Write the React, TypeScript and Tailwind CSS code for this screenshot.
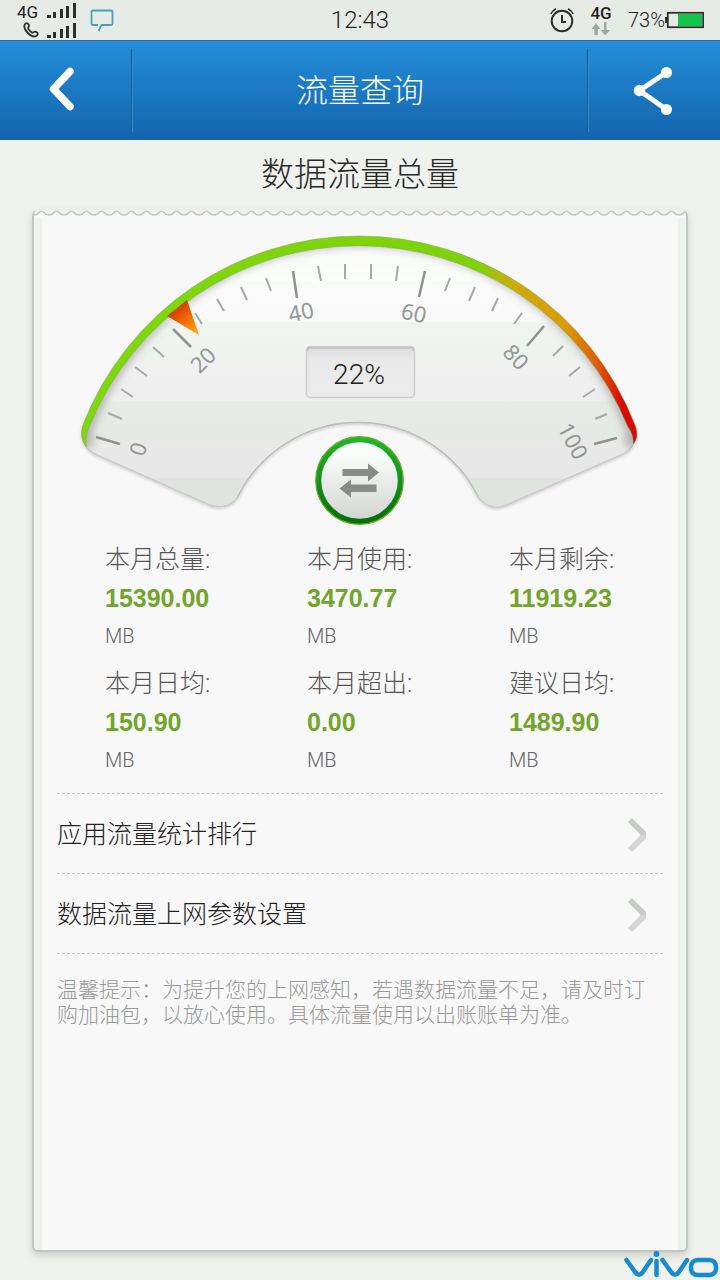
const sans = "font-['Roboto','Noto_Sans_CJK_SC',sans-serif]";

const majorTicks = [
  [96, 437, 120, 444],
  [173, 329, 191, 347],
  [293, 271, 297, 298],
  [425, 271, 419, 297],
  [544, 326, 527, 346],
  [617, 438, 594, 444],
];

const minorTicks = [
  [108, 413, 122, 419],
  [121, 389, 133, 397],
  [135, 367, 147, 376],
  [153, 347, 164, 357],
  [195, 313, 202, 324],
  [217, 299, 224, 311],
  [241, 287, 247, 300],
  [266, 278, 271, 291],
  [318, 266, 321, 281],
  [345, 264, 345, 279],
  [371, 264, 371, 279],
  [398, 266, 396, 281],
  [450, 278, 445, 291],
  [475, 287, 469, 301],
  [498, 298, 492, 311],
  [522, 313, 514, 324],
  [563, 346, 553, 356],
  [580, 367, 569, 376],
  [595, 389, 583, 397],
  [607, 414, 595, 419],
];

const scale = [
  { value: 0, x: 138, y: 449, angle: -72 },
  { value: 20, x: 203, y: 360, angle: -44 },
  { value: 40, x: 301, y: 312, angle: -12 },
  { value: 60, x: 414, y: 313, angle: 12 },
  { value: 80, x: 516, y: 357, angle: 47 },
  { value: 100, x: 573, y: 441, angle: 62 },
];

const stats = [
  { label: "本月总量:", value: "15390.00" },
  { label: "本月使用:", value: "3470.77" },
  { label: "本月剩余:", value: "11919.23" },
  { label: "本月日均:", value: "150.90" },
  { label: "本月超出:", value: "0.00" },
  { label: "建议日均:", value: "1489.90" },
];

const links = ["应用流量统计排行", "数据流量上网参数设置"];

const facePath =
  "M97 455C86 450 79 442 83 426A296 296 0 0 1 634 426C639 442 632 450 621 455L509 504Q490 513 478 497A134 134 0 0 0 238 497Q226 513 205 503Z";

function Signal() {
  return (
    <svg width="30" height="16" viewBox="0 0 30 16" fill="#2b2e2b" aria-hidden="true">
      <rect x="0" y="13" width="4" height="3" />
      <rect x="6" y="10" width="3" height="6" />
      <rect x="13" y="7" width="3" height="9" />
      <rect x="19" y="4" width="3" height="12" />
      <rect x="26" y="1" width="3" height="15" />
    </svg>
  );
}

function StatusBar() {
  return (
    <div className="grid h-10 grid-cols-[1fr_auto_1fr] items-center bg-[#e7ebe6] text-[#1f221f]">
      <div className="flex items-center pl-[17px]">
        <div className="flex w-[30px] flex-col items-start">
          <span className="text-[17px] leading-5">4G</span>
          <svg className="ml-1.5" width="16" height="16" viewBox="0 0 16 16" fill="none" stroke="#2b2e2b" strokeWidth="1.8" strokeLinejoin="round" aria-hidden="true">
            <path d="M1.4 3.4C1.8 1.6 3.6.6 4.8 1.6c1.300 1.100 1.500 2.600.6 3.500-.8.8-.5 1.700 1.500 3.800 1.900 1.800 3 2.100 3.700 1.300 1-.9 2.400-.7 3.600.4 1.200 1.200.2 2.900-1.400 3.600-2.300.9-5.200-.4-8-3.200C2.200 8.300 1 5.600 1.400 3.400Z" />
          </svg>
        </div>
        <div className="flex flex-col gap-1">
          <Signal />
          <Signal />
        </div>
        <svg className="ml-3" width="26" height="24" viewBox="0 0 26 24" fill="none" stroke="#43a3b5" strokeWidth="1.800" strokeLinejoin="round" aria-hidden="true">
          <path d="M9 17H4q-1.500 0-1.500-1.500V4q0-1.500 1.500-1.500h18q1.500 0 1.500 1.500v11.500Q23.500 17 22 17h-9.500L9.500 23" />
        </svg>
      </div>
      <span className="text-2xl font-light">12:43</span>
      <div className="flex items-center justify-end pr-4">
        <svg width="24" height="26" viewBox="0 0 24 26" fill="none" stroke="#2b2e2b" strokeWidth="2" aria-hidden="true">
          <circle cx="12" cy="14" r="10.300" />
          <path d="M12 8v7h4" />
          <path d="M.8 7Q2.500 3.600 6 1.800M23.200 7Q21.500 3.600 18 1.800" strokeWidth="1.600" />
        </svg>
        <div className="ml-4 flex w-[22px] flex-col items-center">
          <span className="text-[17px] font-medium leading-[17px]">4G</span>
          <svg width="20" height="14" viewBox="0 0 20 14" fill="#a3a7a3" aria-hidden="true">
            <path d="M5 1l4.500 6H6.800v6H3.300V7H.5ZM13 0h2.500v8h3.500l-4.700 5.500L9.500 8H13Z" />
          </svg>
        </div>
        <span className="ml-4 text-xl font-light">73%</span>
        <svg width="39" height="18" viewBox="0 0 39 18" aria-hidden="true">
          <rect x="0" y="6" width="3" height="6" fill="#2b2e2b" />
          <rect x="2.800" y="1.800" width="35.400" height="14.400" fill="#e7ebe6" stroke="#2b2e2b" strokeWidth="1.800" />
          <rect x="13" y="3" width="24" height="12" fill="#15c24c" />
        </svg>
      </div>
    </div>
  );
}

function Header() {
  return (
    <header className="flex h-[100px] items-stretch border-t border-[#1c6cae] bg-linear-to-b from-[#258dd8] to-[#1265ad] text-white">
      <button type="button" aria-label="返回" className="flex w-[131px] items-center justify-center pr-2 pb-1">
        <svg width="28" height="46" viewBox="0 0 28 46" fill="none" stroke="#fff" strokeWidth="7.500" strokeLinecap="round" strokeLinejoin="round" aria-hidden="true">
          <path d="M22 5.500 5.500 23 22 40.500" />
        </svg>
      </button>
      <span className="my-2 w-0.5 border-r border-[#3b8cc8] bg-[#14599a]" />
      <h1 className="flex flex-1 items-center justify-center text-[32px] font-light">流量查询</h1>
      <span className="my-2 w-0.5 border-r border-[#3b8cc8] bg-[#14599a]" />
      <button type="button" aria-label="分享" className="flex w-[131px] items-center justify-center pr-1">
        <svg width="40" height="50" viewBox="0 0 40 50" fill="#fff" aria-hidden="true">
          <path d="M33.500 6.500 6.500 24.500l27 19" fill="none" stroke="#fff" strokeWidth="5" />
          <circle cx="33.500" cy="6.500" r="5.500" />
          <circle cx="6.500" cy="24.500" r="5.700" />
          <circle cx="33.500" cy="43.500" r="5.500" />
        </svg>
      </button>
    </header>
  );
}

function TornEdge() {
  return (
    <svg className="block h-2 w-full" aria-hidden="true">
      <defs>
        <pattern id="scallop" width="15" height="8" patternUnits="userSpaceOnUse">
          <rect width="15" height="8" fill="#f0f2ee" />
          <path d="M0 5Q3 5 4.500 3Q7.500 -.5 10.500 3Q12 5 15 5V8H0Z" fill="#f8f8f8" />
          <path d="M0 5Q3 5 4.500 3Q7.500 -.5 10.500 3Q12 5 15 5" fill="none" stroke="#c3c7c2" strokeWidth="1.500" />
        </pattern>
      </defs>
      <rect width="100%" height="8" fill="url(#scallop)" />
    </svg>
  );
}

function Gauge() {
  return (
    <svg className="block w-full" viewBox="57 218 606 312" role="img" aria-label="22%">
      <defs>
        <linearGradient id="face" gradientUnits="userSpaceOnUse" x1="0" y1="240" x2="0" y2="510">
          <stop offset="0" stopColor="#f8f8f8" />
          <stop offset=".15" stopColor="#fcfffc" />
          <stop offset=".152" stopColor="#fbfbfb" />
          <stop offset=".303" stopColor="#f8f9f8" />
          <stop offset=".304" stopColor="#f0f5f0" />
          <stop offset=".447" stopColor="#eef2ee" />
          <stop offset=".448" stopColor="#f1f1f1" />
          <stop offset=".595" stopColor="#eeeeee" />
          <stop offset=".597" stopColor="#e7ece7" />
          <stop offset=".74" stopColor="#e6eae6" />
          <stop offset=".742" stopColor="#e9e9e9" />
          <stop offset=".88" stopColor="#e7e7e7" />
          <stop offset=".882" stopColor="#dfe4df" />
          <stop offset="1" stopColor="#dfe4df" />
        </linearGradient>
        <linearGradient id="rim" gradientUnits="userSpaceOnUse" x1="80" y1="0" x2="638" y2="0">
          <stop offset="0" stopColor="#7fd80d" />
          <stop offset=".71" stopColor="#7dd20c" />
          <stop offset=".78" stopColor="#d0aa0c" />
          <stop offset=".87" stopColor="#dc9a08" />
          <stop offset=".93" stopColor="#dd5a05" />
          <stop offset=".97" stopColor="#d80a03" />
        </linearGradient>
        <linearGradient id="needle" gradientUnits="userSpaceOnUse" x1="174" y1="304" x2="198" y2="334">
          <stop offset="0" stopColor="#c92f08" />
          <stop offset=".5" stopColor="#f26b05" />
          <stop offset="1" stopColor="#ffac10" />
        </linearGradient>
        <linearGradient id="ring" x1="0" y1="0" x2="0" y2="1">
          <stop offset="0" stopColor="#20b62c" />
          <stop offset="1" stopColor="#056f0a" />
        </linearGradient>
        <linearGradient id="knob" x1="0" y1="0" x2="0" y2="1">
          <stop offset=".2" stopColor="#fafcfa" />
          <stop offset="1" stopColor="#d2d4d2" />
        </linearGradient>
        <linearGradient id="readout" x1="0" y1="0" x2="0" y2="1">
          <stop offset="0" stopColor="#dedede" />
          <stop offset=".3" stopColor="#e8e9e8" />
          <stop offset="1" stopColor="#ececec" />
        </linearGradient>
        <filter id="soft" x="-10%" y="-10%" width="120%" height="120%">
          <feGaussianBlur stdDeviation="4" />
        </filter>
        <filter id="lift" x="-5%" y="-5%" width="110%" height="115%">
          <feDropShadow dx="0" dy="1" stdDeviation="1.500" floodColor="#000" floodOpacity=".2" />
        </filter>
        <clipPath id="faceClip">
          <path d={facePath} />
        </clipPath>
      </defs>

      <path d={facePath} fill="url(#face)" stroke="#c9ccc9" strokeWidth="1.500" filter="url(#lift)" />
      <g clipPath="url(#faceClip)">
        <path d="M90 446Q82 438 88 425A291 291 0 0 1 630 425Q636 438 628 446" fill="none" stroke="#777" strokeOpacity=".5" strokeWidth="12" filter="url(#soft)" />
        <path d="M238 497A134 134 0 0 1 478 497" fill="none" stroke="#b9bcb9" strokeWidth="2" />
      </g>
      <path d="M87 447C82 441 80 436 83 425A296 296 0 0 1 635 425C639 436 636 441 633 444C634 437 631 431 628 427A291 291 0 0 0 89 427C86 434 85 441 87 447Z" fill="url(#rim)" stroke="#7d9a4a" strokeOpacity=".4" strokeWidth="1" />

      {minorTicks.map(([x1, y1, x2, y2]) => (
        <line key={`${x1}-${y1}`} x1={x1} y1={y1} x2={x2} y2={y2} stroke="#a6a9a6" strokeWidth="2" />
      ))}
      {majorTicks.map(([x1, y1, x2, y2]) => (
        <line key={`${x1}-${y1}`} x1={x1} y1={y1} x2={x2} y2={y2} stroke="#8f928f" strokeWidth="2.500" />
      ))}
      {scale.map(({ value, x, y, angle }) => (
        <text key={value} transform={`translate(${x} ${y}) rotate(${angle})`} textAnchor="middle" dy="8" fill="#949794" className="font-['Noto_Sans',sans-serif] text-[22px]">
          {value}
        </text>
      ))}
      <path d="M167 316 187 300 199 335Z" fill="url(#needle)" />

      <rect x="306.500" y="346.500" width="108" height="51" rx="4" fill="url(#readout)" stroke="#cdcfcd" strokeWidth="1.500" />
      <path d="M308 351v-3h105v3" fill="none" stroke="#b4b6b4" strokeOpacity=".6" strokeWidth="2" />
      <text x="359" y="384" textAnchor="middle" fill="#222" className="text-[28px] font-light">
        22%
      </text>

      <circle cx="359.500" cy="480.500" r="41" fill="url(#knob)" stroke="url(#ring)" strokeWidth="5.500" />
      <circle cx="359.500" cy="480.500" r="43.800" fill="none" stroke="#6fae22" strokeWidth="1.200" />
      <path d="M342.500 469H368v-5.500l11 9-11 9V476H342.500ZM376.500 484.500H351V479.500l-11.500 9 11.500 9V492h25.500Z" fill="#888c88" />
    </svg>
  );
}

function VivoLogo() {
  return (
    <svg className="absolute right-0 bottom-0" width="96" height="30" viewBox="0 0 96 30" fill="none" stroke="#158bd0" strokeWidth="4.500" strokeLinecap="round" strokeLinejoin="round" role="img" aria-label="vivo">
      <path d="M2.500 10 11.500 22.500Q15 27 18.500 22.500L27 10M32.500 11V25M38.500 10 47.500 22.500Q51 27 54.500 22.500L63 10" />
      <rect x="67" y="10" width="25" height="15" rx="6.500" />
      <circle cx="32.500" cy="4" r="2.900" fill="#158bd0" stroke="none" />
    </svg>
  );
}

export default function App() {
  return (
    <div className={`relative flex min-h-screen flex-col bg-[#f0f2ee] ${sans}`}>
      <StatusBar />
      <Header />
      <main className="flex flex-1 flex-col px-8 pb-7">
        <h2 className="py-3 text-center text-[33px] leading-[46px] font-light text-[#2a2a2a]">数据流量总量</h2>
        <section className="flex flex-1 flex-col overflow-hidden rounded-md border-x-2 border-b-2 border-[#c2c6c2] bg-[#f8f8f8] shadow-[0_4px_8px_rgba(0,0,0,0.15)]">
          <TornEdge />
          <div className="flex-1 border-x-8 border-[#eff2ee] px-[15px]">
            <Gauge />
            <dl className="-mr-12 ml-12 grid grid-cols-3 gap-y-[10px] pt-[11px]">
              {stats.map(({ label, value }) => (
                <div key={label} className="flex flex-col">
                  <dt className="text-[25px] leading-[38px] font-light text-[#555]">{label}</dt>
                  <dd className="font-['Liberation_Sans',sans-serif] text-[25px] leading-[38px] font-bold text-[#71a52b]">{value}</dd>
                  <dd className="text-xl leading-[38px] font-light text-[#666]">MB</dd>
                </div>
              ))}
            </dl>
            <nav className="mt-[14px] border-t border-dashed border-[#c0c0c0]">
              {links.map((text) => (
                <a key={text} href="#" className="flex h-20 items-center justify-between border-b border-dashed border-[#c0c0c0] pt-[3px] pr-4 text-[25px] font-light text-[#222]">
                  {text}
                  <svg width="20" height="36" viewBox="0 0 20 36" fill="none" strokeWidth="6" aria-hidden="true">
                    <path d="M3 3 16 16v2" stroke="#c7ccc7" />
                    <path d="M3 33 16 20v-2" stroke="#d3d4d3" />
                  </svg>
                </a>
              ))}
            </nav>
            <p className="pt-6 text-[21px] leading-[25px] font-light text-[#999]">
              温馨提示：为提升您的上网感知，若遇数据流量不足，请及时订购加油包，以放心使用。具体流量使用以出账账单为准。
            </p>
          </div>
        </section>
      </main>
      <VivoLogo />
    </div>
  );
}
